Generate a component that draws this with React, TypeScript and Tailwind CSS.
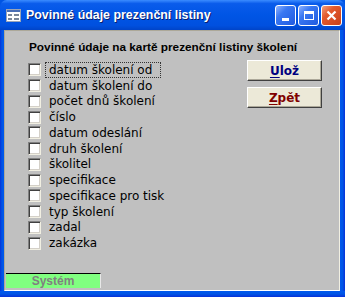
import { useState } from 'react'

const FIELDS = [
  'datum školení od',
  'datum školení do',
  'počet dnů školení',
  'číslo',
  'datum odeslání',
  'druh školení',
  'školitel',
  'specifikace',
  'specifikace pro tisk',
  'typ školení',
  'zadal',
  'zakázka',
]

function FormIcon() {
  return (
    <svg width="15" height="13" viewBox="0 0 15 13" className="shrink-0">
      <rect x="0.5" y="0.5" width="14" height="12" fill="#ffffff" stroke="#9aa5b8" />
      <rect x="1" y="1" width="13" height="2" fill="#4a6fb5" />
      <rect x="2" y="5" width="4" height="2" fill="#7a8799" />
      <rect x="8" y="5" width="5" height="2" fill="#7a8799" />
      <rect x="2" y="9" width="4" height="2" fill="#7a8799" />
      <rect x="8" y="9" width="5" height="2" fill="#7a8799" />
    </svg>
  )
}

function CaptionButton({ kind }: { kind: 'min' | 'max' | 'close' }) {
  const face =
    kind === 'close'
      ? 'bg-[linear-gradient(135deg,#f0a080_0%,#e35a2e_35%,#c8401a_100%)]'
      : 'bg-[linear-gradient(135deg,#8fb3ff_0%,#3a78f2_35%,#1f5ae0_100%)]'
  return (
    <div
      className={`flex h-[21px] w-[21px] items-center justify-center rounded-[3px] border border-white ${face}`}
    >
      {kind === 'min' && <div className="mt-[8px] h-[3px] w-[7px] bg-white" />}
      {kind === 'max' && <div className="h-[9px] w-[10px] border border-t-[3px] border-white" />}
      {kind === 'close' && (
        <svg width="11" height="11" viewBox="0 0 11 11">
          <path d="M1.5 1.5 L9.5 9.5 M9.5 1.5 L1.5 9.5" stroke="#fff" strokeWidth="2.2" />
        </svg>
      )}
    </div>
  )
}

function Checkbox({ checked, onToggle }: { checked: boolean; onToggle: () => void }) {
  return (
    <button
      onClick={onToggle}
      className="flex h-[13px] w-[13px] shrink-0 items-center justify-center border border-t-[#808080] border-l-[#808080] border-b-[#f1efe2] border-r-[#f1efe2] bg-white shadow-[inset_1px_1px_0_#404040,inset_-1px_-1px_0_#d4d0c8]"
    >
      {checked && (
        <svg width="7" height="7" viewBox="0 0 7 7">
          <path d="M0.5 3 L2.5 5 L6.5 1" stroke="#000" strokeWidth="1.6" fill="none" />
        </svg>
      )}
    </button>
  )
}

function FormButton({ hot, rest, color }: { hot: string; rest: string; color: string }) {
  return (
    <button
      className={`flex h-[21px] w-[75px] items-center justify-center border border-t-white border-l-white border-b-[#404040] border-r-[#404040] bg-[#ece9d8] shadow-[inset_-1px_-1px_0_#aca899] text-[12px] font-bold ${color}`}
    >
      <span className="underline underline-offset-2">{hot}</span>
      {rest}
    </button>
  )
}

export default function App() {
  const [checked, setChecked] = useState<boolean[]>(FIELDS.map(() => false))

  return (
    <div className="flex h-[297px] w-[345px] flex-col overflow-hidden bg-[#0054e3] font-['DejaVu_Sans',sans-serif]">
      <div className="flex h-[30px] shrink-0 items-center rounded-t-[7px] bg-[linear-gradient(180deg,#3b8cff_0%,#0a5ceb_12%,#0055e5_50%,#0050df_85%,#0044c8_100%)] pl-[6px] pr-[3px]">
        <FormIcon />
        <div className="ml-[5px] flex-1 text-[12.4px] font-bold text-white [text-shadow:1px_1px_0_#0a1e6e] font-['Liberation_Sans',sans-serif]">
          Povinné údaje prezenční listiny
        </div>
        <div className="flex gap-[2px]">
          <CaptionButton kind="min" />
          <CaptionButton kind="max" />
          <CaptionButton kind="close" />
        </div>
      </div>

      <div className="flex min-h-0 flex-1">
        <div className="w-[4px] shrink-0 bg-[linear-gradient(90deg,#0831d9_0%,#0055e5_50%,#0058ee_100%)]" />
        <div className="flex flex-1 flex-col border border-t-[#aca899] border-l-[#aca899] border-b-white border-r-[#f1efe2] bg-[#c0c0c0]">
          <div className="pl-[24px] pt-[9px] text-[11.8px] font-bold leading-[14px] text-black font-['Liberation_Sans',sans-serif]">
            Povinné údaje na kartě prezenční listiny školení
          </div>

          <div className="mt-[8px] flex">
            <div className="flex w-[218px] flex-col pl-[23px]">
              {FIELDS.map((f, i) => (
                <div key={f} className="flex h-[15.75px] items-center">
                  <Checkbox
                    checked={checked[i]}
                    onToggle={() => setChecked((c) => c.map((v, j) => (j === i ? !v : v)))}
                  />
                  <span
                    className={`ml-[4px] whitespace-nowrap px-[3px] text-[12px] leading-[14px] text-black ${
                      i === 0 ? 'border border-dotted border-[#333] w-[116px]' : 'border border-transparent'
                    }`}
                  >
                    {f}
                  </span>
                </div>
              ))}
            </div>
            <div className="-mt-[2px] ml-[24px] flex flex-col gap-[6px]">
              <FormButton hot="U" rest="lož" color="text-[#000080]" />
              <FormButton hot="Z" rest="pět" color="text-[#800000]" />
            </div>
          </div>

          <div className="mt-auto flex">
            <div className="ml-[1px] flex h-[15px] w-[95px] items-center justify-center border-t border-t-black border-r border-r-[#e8e8e8] bg-[#80ff80] text-[12px] font-bold text-[#808080] font-['Liberation_Sans',sans-serif]">
              Systém
            </div>
          </div>
          <div className="h-[2px]" />
        </div>
        <div className="w-[5px] shrink-0 bg-[linear-gradient(90deg,#0058ee_0%,#0055e5_50%,#0831d9_100%)]" />
      </div>
      <div className="h-[6px] shrink-0 bg-[linear-gradient(180deg,#0058ee_0%,#0055e5_50%,#0831d9_100%)]" />
    </div>
  )
}
